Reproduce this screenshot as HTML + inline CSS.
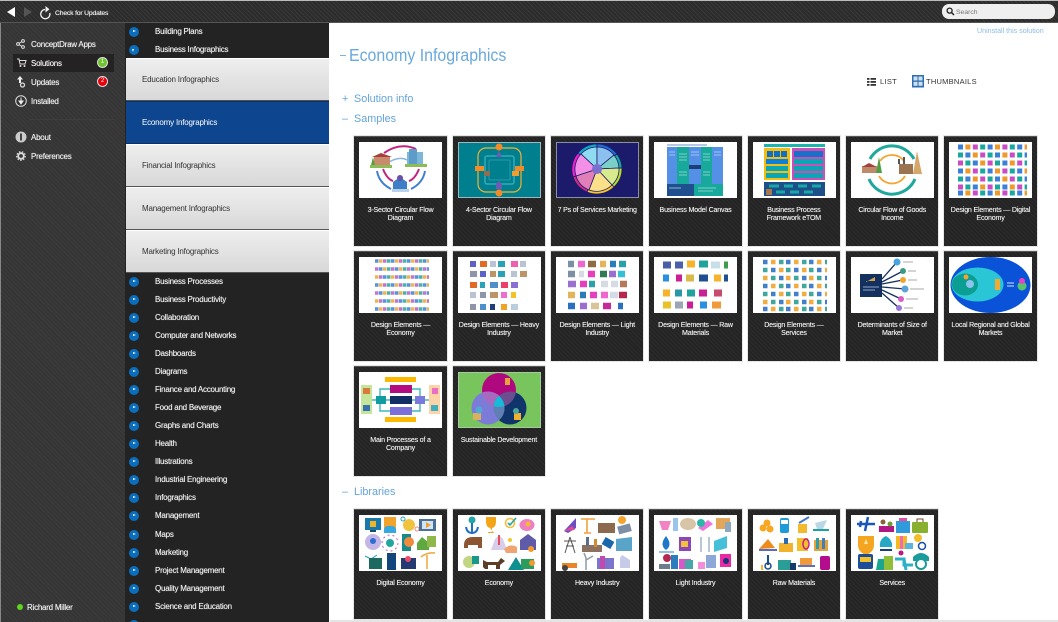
<!DOCTYPE html>
<html><head><meta charset="utf-8"><title>Economy Infographics</title>
<style>
*{box-sizing:border-box}
html,body{margin:0;padding:0;background:#fff}
body{width:1058px;height:622px;overflow:hidden;position:relative}
#w{position:absolute;left:0;top:0;width:1058px;height:622px;overflow:hidden;background:#fff;font-family:"Liberation Sans",sans-serif;filter:blur(.35px)}
.a{position:absolute}
#top{left:0;top:0;width:1058px;height:23px;border-top:1px solid #bbb;border-bottom:1px solid #555;background-color:#2c2c2c;background-image:repeating-linear-gradient(45deg,rgba(255,255,255,.06) 0 1px,transparent 1px 3px)}
#left{left:0;top:23px;width:125px;height:599px;background-color:#353535;background-image:repeating-linear-gradient(45deg,rgba(255,255,255,.03) 0 1px,transparent 1px 3px);border-left:1px solid #888}
#mid{left:125px;top:23px;width:204px;height:599px;background:#232323}
.t{position:absolute;margin-top:1px;white-space:nowrap;font-size:8px;letter-spacing:-.24px;line-height:10px;color:#f2f2f2;text-shadow:0 0 .6px rgba(255,255,255,.7)}
.m{left:155px}
.b{position:absolute;left:129px;width:10px;height:10px;border-radius:50%;background:#0a6ebd}
.b:after{content:"";position:absolute;left:4px;top:3.2px;border-left:3px solid #fff;border-top:1.8px solid transparent;border-bottom:1.8px solid transparent}
.b.d:after{left:3.2px;top:4px;border-top:3px solid #fff;border-left:1.8px solid transparent;border-right:1.8px solid transparent;border-bottom:0}
.p{position:absolute;left:126px;width:203px;height:43px;background:linear-gradient(#eee,#d8d8d8);border-bottom:1px solid #555;border-top:1px solid #fff;color:#333;font-size:8px;letter-spacing:-.2px;line-height:42px;padding-left:16px}
.p.s{background:#0d458f;color:#fff;border-top:1px solid #0a2f66;border-bottom:1px solid #0a2f66}
.c{position:absolute;width:92.4px;height:110px;background-color:#242424;background-image:repeating-linear-gradient(45deg,rgba(255,255,255,.035) 0 1px,transparent 1px 3px);border-top:1px solid #555;box-shadow:0 0 0 1px #e6e6e6}
.c svg{position:absolute;left:5px;top:5px;width:83px;height:56px;background:#fff;display:block}
.c div{position:absolute;left:1px;right:1px;top:69px;text-align:center;color:#f0f0f0;font-size:7.100px;letter-spacing:-.2px;line-height:8px;text-shadow:0 0 .5px rgba(255,255,255,.7)}
.h{position:absolute;color:#63a4da;font-size:10.800px;line-height:14px;white-space:nowrap}
</style></head><body><div id="w">

<div id="top" class="a"></div>
<svg class="a" style="left:6px;top:6px" width="100" height="14" viewBox="0 0 100 14">
<path d="M1 6 9 1V11Z" fill="#fff"/><path d="M18 1 26 6 18 11Z" fill="#555"/>
<path d="M39 3.500A4.600 4.600 0 1 0 43.800 7" fill="none" stroke="#eee" stroke-width="1.300"/><path d="M39.500 0V6.500L43.500 3.200Z" fill="#eee"/>
</svg>
<div class="t" style="left:55px;top:8px;font-size:6.800px;letter-spacing:-.18px">Check for Updates</div>
<div class="a" style="left:942px;top:4px;width:113px;height:15px;border-radius:7px;background:#efefef"></div>
<svg class="a" style="left:946px;top:7px" width="9" height="9" viewBox="0 0 9 9"><circle cx="3.600" cy="3.600" r="2.500" fill="none" stroke="#222" stroke-width="1.300"/><path d="M5.500 5.500 8 8" stroke="#222" stroke-width="1.500"/></svg>
<div class="t" style="left:956px;top:7px;color:#777;font-size:6.800px;letter-spacing:0;text-shadow:none">Search</div>

<div id="left" class="a"></div>
<div id="mid" class="a"></div>

<div class="a" style="left:13px;top:54px;width:101px;height:18px;background:#252223"></div>
<svg class="a" style="left:14px;top:36px" width="14" height="130" viewBox="0 0 14 130">
<g fill="none" stroke="#ddd" stroke-width="1"><circle cx="4" cy="8" r="1.400"/><circle cx="9" cy="5" r="1.400"/><circle cx="9" cy="11" r="1.400"/><path d="M5 7.500 8 5.500M5 8.500 8 10.500"/></g>
<path d="M3 23H5L6 28H11L12 24.500H5.500" fill="none" stroke="#ddd"/><circle cx="6.500" cy="30" r="1" fill="#ddd"/><circle cx="10.500" cy="30" r="1" fill="#ddd"/>
<path d="M6 40 9 43.500H7V47H5V43.500H3Z" fill="#eee"/><circle cx="8.500" cy="49" r="2" fill="none" stroke="#ddd" stroke-width="1.300"/>
<circle cx="7" cy="65" r="5.300" fill="#333" stroke="#ddd" stroke-width="1"/><path d="M7 61.500V66M5 65 7 68 9 65Z" stroke="#eee" fill="#eee"/>
<circle cx="7" cy="101" r="5.500" fill="#ccc"/><rect x="6" y="97.500" width="2" height="7" fill="#444"/>
<circle cx="7" cy="120" r="2.800" fill="none" stroke="#ddd" stroke-width="1.800"/><circle cx="7" cy="120" r="4.300" fill="none" stroke="#ddd" stroke-width="1.200" stroke-dasharray="1.500 1.500"/>
</svg>
<div class="t" style="left:31px;top:39px">ConceptDraw Apps</div>
<div class="t" style="left:31px;top:58px">Solutions</div>
<div class="t" style="left:31px;top:77px">Updates</div>
<div class="t" style="left:31px;top:96px">Installed</div>
<div class="t" style="left:31px;top:132px">About</div>
<div class="t" style="left:31px;top:151px">Preferences</div>
<div class="a" style="left:30px;top:119px;width:84px;height:1px;background:#3e3e3e"></div>
<div class="a" style="left:97px;top:57px;width:11px;height:11px;border-radius:50%;background:#6fc52c;border:1px solid #ddd;color:#fff;font-size:6px;line-height:9px;text-align:center">1</div>
<div class="a" style="left:97px;top:76px;width:11px;height:11px;border-radius:50%;background:#e8000d;border:1px solid #ddd;color:#fff;font-size:6px;line-height:9px;text-align:center">2</div>
<div class="a" style="left:17px;top:604px;width:6px;height:6px;border-radius:50%;background:#5fd31f"></div>
<div class="t" style="left:27px;top:602px">Richard Miller</div>

<div class="b" style="top:27px"></div><div class="t m" style="top:26px">Building Plans</div>
<div class="b d" style="top:45px"></div><div class="t m" style="top:44px">Business Infographics</div>
<div class="p" style="top:58px">Education Infographics</div>
<div class="p s" style="top:101px">Economy Infographics</div>
<div class="p" style="top:144px">Financial Infographics</div>
<div class="p" style="top:187px">Management Infographics</div>
<div class="p" style="top:230px">Marketing Infographics</div>

<div class="b" style="top:277px"></div><div class="t m" style="top:276px">Business Processes</div>
<div class="b" style="top:295px"></div><div class="t m" style="top:294px">Business Productivity</div>
<div class="b" style="top:313px"></div><div class="t m" style="top:312px">Collaboration</div>
<div class="b" style="top:331px"></div><div class="t m" style="top:330px">Computer and Networks</div>
<div class="b" style="top:349px"></div><div class="t m" style="top:348px">Dashboards</div>
<div class="b" style="top:367px"></div><div class="t m" style="top:366px">Diagrams</div>
<div class="b" style="top:385px"></div><div class="t m" style="top:384px">Finance and Accounting</div>
<div class="b" style="top:403px"></div><div class="t m" style="top:402px">Food and Beverage</div>
<div class="b" style="top:421px"></div><div class="t m" style="top:420px">Graphs and Charts</div>
<div class="b" style="top:439px"></div><div class="t m" style="top:438px">Health</div>
<div class="b" style="top:457px"></div><div class="t m" style="top:456px">Illustrations</div>
<div class="b" style="top:475px"></div><div class="t m" style="top:474px">Industrial Engineering</div>
<div class="b" style="top:493px"></div><div class="t m" style="top:492px">Infographics</div>
<div class="b" style="top:511px"></div><div class="t m" style="top:510px">Management</div>
<div class="b" style="top:530px"></div><div class="t m" style="top:529px">Maps</div>
<div class="b" style="top:548px"></div><div class="t m" style="top:547px">Marketing</div>
<div class="b" style="top:566px"></div><div class="t m" style="top:565px">Project Management</div>
<div class="b" style="top:584px"></div><div class="t m" style="top:583px">Quality Management</div>
<div class="b" style="top:602px"></div><div class="t m" style="top:601px">Science and Education</div>
<div class="b" style="top:620px"></div>

<div class="t" style="left:977px;top:25px;color:#8dbbe3;font-size:7.100px;letter-spacing:0;text-shadow:none">Uninstall this solution</div>
<div class="a" style="left:340px;top:55px;width:6px;height:1px;background:#7fb3de"></div>
<div class="t" style="left:349px;top:43px;font-size:17.300px;letter-spacing:0;line-height:22px;color:#6aa9dc;text-shadow:none;transform:scaleX(.92);transform-origin:0 0">Economy Infographics</div>

<svg class="a" style="left:866px;top:75px" width="60" height="14" viewBox="0 0 60 14"><g fill="#333"><rect x="1" y="3" width="2.500" height="1.800"/><rect x="4.500" y="3" width="5.500" height="1.800"/><rect x="1" y="6" width="2.500" height="1.800"/><rect x="4.500" y="6" width="5.500" height="1.800"/><rect x="1" y="9" width="2.500" height="1.800"/><rect x="4.500" y="9" width="5.500" height="1.800"/></g>
<rect x="46" y="0" width="12" height="12.500" fill="#2e6fb0"/><g fill="#cfe0f0"><rect x="47.500" y="1.500" width="4" height="4"/><rect x="52.500" y="1.500" width="4" height="4"/><rect x="47.500" y="6.800" width="4" height="4"/><rect x="52.500" y="6.800" width="4" height="4"/></g></svg>
<div class="t" style="left:880px;top:76px;color:#333;font-size:7.500px;letter-spacing:.3px;text-shadow:none">LIST</div>
<div class="t" style="left:926px;top:76px;color:#333;font-size:7.500px;letter-spacing:.25px;text-shadow:none">THUMBNAILS</div>

<div class="h" style="left:342px;top:91.500px">+</div><div class="h" style="left:354px;top:91.500px">Solution info</div>
<div class="h" style="left:342px;top:111.500px">&#8211;</div><div class="h" style="left:354px;top:111.500px">Samples</div>
<div class="h" style="left:342px;top:484.500px">&#8211;</div><div class="h" style="left:354px;top:484.500px">Libraries</div>

<!-- Row 1 -->
<div class="c" style="left:354.300px;top:135.500px"><svg viewBox="0 0 83 56"><path d="M25 11Q41 0 57 7" fill="none" stroke="#c0267f" stroke-width="2"/><path d="M30 20Q41 14 48 18" fill="none" stroke="#8ab4e0" stroke-width="1.500"/><path d="M18 29Q20 41 32 47" fill="none" stroke="#3f7fd0" stroke-width="2"/><path d="M66 29Q64 41 52 47" fill="none" stroke="#3f7fd0" stroke-width="2"/><path d="M24 27Q28 37 34 39M60 27Q56 37 50 39" fill="none" stroke="#c0267f" stroke-width="2"/><path d="M11 23H33V26H11Z" fill="#8bbd55"/><rect x="15" y="14" width="16" height="9" fill="#c98a6e"/><path d="M13 15 22 11 33 15Z" fill="#a3413a"/><path d="M12 23 14 15 16 23Z" fill="#5a9e3c"/><rect x="48" y="10" width="16" height="13" fill="#7cb6d8"/><rect x="50" y="7" width="8" height="16" fill="#5d9cc8"/><rect x="46" y="22" width="22" height="3" fill="#8bbd55"/><path d="M34 48V40L41 35 48 40V48Z" fill="#3e7ec6"/><circle cx="41" cy="36" r="3" fill="#6b4fa5"/><rect x="33" y="47" width="17" height="3" fill="#b7d1e8"/></svg><div>3-Sector Circular Flow<br>Diagram</div></div>
<div class="c" style="left:452.700px;top:135.500px"><svg viewBox="0 0 83 56" style="background:#00808f"><rect x=".5" y=".5" width="82" height="55" fill="none" stroke="#9fb8bd"/><rect x="20" y="6" width="43" height="44" rx="8" fill="none" stroke="#f2b233" stroke-width="1.200"/><rect x="27" y="14" width="29" height="28" rx="2" fill="none" stroke="#35a9b8" stroke-width="1.500"/><rect x="31" y="18" width="21" height="20" rx="1" fill="none" stroke="#2a98a8"/><circle cx="41" cy="5" r="3.500" fill="#f28c28"/><circle cx="41" cy="51" r="3.500" fill="#f28c28"/><rect x="17" y="24" width="9" height="5" fill="#f28c28"/><rect x="57" y="24" width="9" height="5" fill="#f28c28"/><path d="M38 15 41 9 44 15Z" fill="#6d5bb5"/><path d="M38 47V42L41 39 44 42V47Z" fill="#6d5bb5"/><rect x="26" y="29" width="6" height="5" fill="#8d6e52"/><rect x="54" y="29" width="7" height="5" fill="#ec9f2e"/></svg><div>4-Sector Circular Flow<br>Diagram</div></div>
<div class="c" style="left:551px;top:135.500px"><svg viewBox="0 0 83 56" style="background:#1c1b6b"><rect x=".5" y=".5" width="82" height="55" fill="none" stroke="#8a8fa8"/><g stroke="#1c1b6b" stroke-width=".8"><path d="M41 27V2A25 25 0 0 0 22 11Z" fill="#12a8c8"/><path d="M41 27V2A25 25 0 0 1 61 12Z" fill="#1d6fd0"/><path d="M41 27 61 12A25 25 0 0 1 66 26Z" fill="#18a8a0"/><path d="M41 27 66 26A25 25 0 0 1 58 45Z" fill="#b8dc2a"/><path d="M41 27 58 45A25 25 0 0 1 31 50Z" fill="#f6c62a"/><path d="M41 27 31 50A25 25 0 0 1 17 35Z" fill="#cb2a88"/><path d="M41 27 17 35A25 25 0 0 1 22 11Z" fill="#ec1fd0"/><path d="M41 27V5A22 22 0 0 0 25 12Z" fill="#8fdcf0"/><path d="M41 27V5A22 22 0 0 1 58 13Z" fill="#8cc0ee"/><path d="M41 27 58 13A22 22 0 0 1 63 26Z" fill="#7ad0c8"/><path d="M41 27 63 26A22 22 0 0 1 56 43Z" fill="#d8ea8e"/><path d="M41 27 56 43A22 22 0 0 1 33 48Z" fill="#fbe08a"/><path d="M41 27 33 48A22 22 0 0 1 20 34Z" fill="#e07fb8"/><path d="M41 27 20 34A22 22 0 0 1 25 12Z" fill="#f48fe8"/></g><circle cx="41" cy="27" r="5" fill="#7b6fd0"/></svg><div>7 Ps of Services Marketing</div></div>
<div class="c" style="left:649.300px;top:135.500px"><svg viewBox="0 0 83 56"><rect x="13" y="5" width="56" height="37" fill="#5390e6"/><rect x="23" y="5" width="12" height="37" fill="#16a99c"/><rect x="47" y="5" width="11" height="37" fill="#16a99c"/><rect x="35" y="23" width="12" height="4" fill="#1d3f79"/><rect x="13" y="42" width="27" height="12" fill="#1f4f8f"/><rect x="40" y="42" width="29" height="12" fill="#16a99c"/><rect x="13" y="2" width="40" height="2" fill="#b7c9e2"/><path d="M25 12h8M25 15h8M25 18h8M49 12h7M49 15h7M49 18h7M25 30h8M25 33h8M49 30h7M49 33h7M15 46h12M44 46h18M44 49h15" stroke="#a8dcd8" stroke-width=".7"/><path d="M15 10h6M15 13h6M37 10h8M37 13h8M60 10h7M60 13h7" stroke="#bcd4f4" stroke-width=".7"/></svg><div>Business Model Canvas</div></div>
<div class="c" style="left:747.700px;top:135.500px"><svg viewBox="0 0 83 56"><rect x="11" y="2" width="61" height="3" fill="#1cb5ae"/><rect x="11" y="6" width="26" height="32" fill="#f4bd12"/><rect x="14" y="9" width="6" height="6" fill="#0d6fc6"/><rect x="21" y="9" width="6" height="6" fill="#0d6fc6"/><rect x="28" y="9" width="6" height="6" fill="#0d6fc6"/><rect x="13" y="17" width="22" height="5" fill="#0d7fd6"/><rect x="13" y="24" width="22" height="5" fill="#0aa6b5"/><rect x="13" y="31" width="22" height="5" fill="#0aa6b5"/><rect x="39" y="6" width="33" height="32" fill="#cb4fb5"/><rect x="41" y="9" width="29" height="6" fill="#1a6fc8"/><rect x="41" y="17" width="29" height="5" fill="#0aa6b5"/><rect x="41" y="24" width="29" height="5" fill="#0aa6b5"/><rect x="41" y="31" width="29" height="5" fill="#0aa6b5"/><rect x="11" y="40" width="61" height="14" fill="#1d4f88"/><path d="M16 44h10M31 44h9M45 44h9M59 44h9M23 50h9M37 50h9M51 50h9" stroke="#17a8a8" stroke-width="3"/><rect x="13" y="47" width="6" height="6" fill="#a9774a"/></svg><div>Business Process<br>Framework eTOM</div></div>
<div class="c" style="left:846px;top:135.500px"><svg viewBox="0 0 83 56"><path d="M19 17A25 25 0 0 1 63 17" fill="none" stroke="#1fa89c" stroke-width="3"/><path d="M64 37A25 25 0 0 1 18 37" fill="none" stroke="#1fa89c" stroke-width="3"/><path d="M29 19A15 15 0 0 1 53 19M54 34A15 15 0 0 1 28 34" fill="none" stroke="#f5a531" stroke-width="1.800"/><rect x="11" y="24" width="15" height="7" fill="#bf8a6a"/><path d="M11 25 18 21 26 25Z" fill="#a3413a"/><path d="M25 31 28 15 31 31Z" fill="#4f9e45"/><rect x="48" y="22" width="14" height="10" fill="#9b7350"/><path d="M62 32 66 9 71 32Z" fill="#d5a76a"/><path d="M48 22V17M53 22V15" stroke="#555" stroke-width="2"/></svg><div>Circular Flow of Goods<br>Income</div></div>
<div class="c" style="left:944.300px;top:135.500px"><svg viewBox="0 0 83 56"><g fill="none" stroke-width="5" stroke-dasharray="5 24.600"><path stroke="#3a7fd8" d="M9 5H78M16.400 13H78M23.800 21H78M9 29H78M16.400 37H78M23.800 45H78M9 51H78"/><path stroke="#ee9a2a" d="M16.400 5H78M23.800 13H78M31.200 21H78M16.400 29H78M23.800 37H78M31.200 45H78M16.400 51H78"/><path stroke="#c94cc4" d="M23.800 5H78M31.200 13H78M9 21H78M23.800 29H78M31.200 37H78M9 45H78M23.800 51H78"/><path stroke="#17a8a0" d="M31.200 5H78M9 13H78M16.400 21H78M31.200 29H78M9 37H78M16.400 45H78M31.200 51H78"/></g></svg><div>Design Elements &#8212; Digital<br>Economy</div></div>

<!-- Row 2 -->
<div class="c" style="left:354.300px;top:250.500px"><svg viewBox="0 0 83 56"><g fill="none" stroke-width="3.500" stroke-dasharray="3.500 12.500" opacity=".85"><path stroke="#3a7fd8" d="M16 4H70M20 12H70M24 20H70M16 28H70M20 36H70M24 44H70M16 52H70"/><path stroke="#f0a52e" d="M20 4H70M24 12H70M16 20H70M20 28H70M24 36H70M16 44H70M20 52H70"/><path stroke="#b25ec9" d="M24 4H70M16 12H70M20 20H70M24 28H70M16 36H70M20 44H70M24 52H70"/><path stroke="#29a69b" d="M28 4H70M28 12H70M28 20H70M28 28H70M28 36H70M28 44H70M28 52H70"/></g></svg><div>Design Elements &#8212;<br>Economy</div></div>
<div class="c" style="left:452.700px;top:250.500px"><svg viewBox="0 0 83 56"><g fill="none" stroke-width="6"><path stroke="#5d62c9" d="M12 7h6M22 17h6"/><path stroke="#e26a25" d="M22 7h7M12 28h7"/><path stroke="#b9c3d4" d="M32 7h6M12 38h6M62 7h6M53 17h6"/><path stroke="#28a3b6" d="M40 7h7M40 17h7M22 28h5"/><path stroke="#ef5fb0" d="M53 7h7"/><path stroke="#8f95a8" d="M12 17h7M22 38h6M12 50h6"/><path stroke="#bd9468" d="M32 17h6M62 17h7M32 38h8"/><path stroke="#4f8fc9" d="M32 28h8M22 50h6"/><path stroke="#ee3f6a" d="M43 28h7"/><path stroke="#8a6fd0" d="M53 28h7"/><path stroke="#ef6cd0" d="M43 38h6"/><path stroke="#f1c325" d="M53 38h5"/><path stroke="#1e3f7a" d="M32 50h5"/><path stroke="#f1a325" d="M43 50h6"/><path stroke="#b8cddd" d="M53 50h7"/></g></svg><div>Design Elements &#8212; Heavy<br>Industry</div></div>
<div class="c" style="left:551px;top:250.500px"><svg viewBox="0 0 83 56"><g fill="none" stroke-width="6.500"><path stroke="#7b8fa5" d="M12 7h6M12 17h7"/><path stroke="#ef66cf" d="M22 7h7M45 38h7"/><path stroke="#8e6b42" d="M32 7h8"/><path stroke="#e4b45a" d="M44 7h6M12 38h7"/><path stroke="#2a7db8" d="M54 7h6M24 38h6"/><path stroke="#2aa0a8" d="M63 7h7M33 27h6"/><path stroke="#d5dae5" d="M23 17h5M45 27h7M55 27h7M54 38h8"/><path stroke="#e63fbc" d="M32 17h7M24 27h7M34 38h7"/><path stroke="#2f7a55" d="M44 17h7"/><path stroke="#9a6fd0" d="M53 17h7M12 27h8M24 49h7"/><path stroke="#35c0d8" d="M62 17h7"/><path stroke="#b5785a" d="M64 27h7"/><path stroke="#b5274d" d="M63 38h8"/><path stroke="#2a6fc0" d="M12 49h7M62 49h5"/><path stroke="#d9c49a" d="M35 49h8"/><path stroke="#c42a9a" d="M47 49h8"/></g></svg><div>Design Elements &#8212; Light<br>Industry</div></div>
<div class="c" style="left:649.300px;top:250.500px"><svg viewBox="0 0 83 56"><g fill="none" stroke-width="7"><path stroke="#4b5fa8" d="M9 8h8M21 8h8"/><path stroke="#f7b32a" d="M33 7h8M9 36h7M60 21h7"/><path stroke="#20a39c" d="M45 7h9M33 36h8"/><path stroke="#c8dfe8" d="M57 8h9"/><path stroke="#3c9e4a" d="M70 8h4"/><path stroke="#2a8fe0" d="M9 21h6M46 48h7"/><path stroke="#cb1f95" d="M22 21h6M45 36h8M33 48h6"/><path stroke="#d9b94a" d="M32 21h8"/><path stroke="#1f4f8f" d="M45 21h9M70 21h4"/><path stroke="#2a97a8" d="M21 36h7"/><path stroke="#c94a70" d="M60 36h8"/><path stroke="#e9c22a" d="M9 48h8"/><path stroke="#9aa5b5" d="M21 48h8"/><path stroke="#f09a3a" d="M58 48h9"/></g></svg><div>Design Elements &#8212; Raw<br>Materials</div></div>
<div class="c" style="left:747.700px;top:250.500px"><svg viewBox="0 0 83 56"><g fill="none" stroke-width="4.500" stroke-dasharray="4.500 18.500" opacity=".9"><path stroke="#2f73c7" d="M10 5H74M18 13H74M26 21H74M10 29H74M18 37H74M26 45H74M10 52H74"/><path stroke="#f2a42b" d="M18 5H74M26 13H74M10 21H74M18 29H74M26 37H74M10 45H74M18 52H74"/><path stroke="#2a9f94" d="M26 5H74M10 13H74M18 21H74M26 29H74M10 37H74M18 45H74M26 52H74"/></g></svg><div>Design Elements &#8212;<br>Services</div></div>
<div class="c" style="left:846px;top:250.500px"><svg viewBox="0 0 83 56"><rect x="9" y="17" width="22" height="23" fill="#14305f"/><path d="M31 22 46 5M31 25 52 14M31 27 52 23M31 30 54 32M31 33 50 42M31 36 48 51" stroke="#14305f" stroke-width="1.300" fill="none"/><circle cx="46" cy="5" r="3.500" fill="#4aa5de"/><circle cx="52" cy="14" r="3" fill="#3c9b80"/><circle cx="52" cy="23" r="3" fill="#f2a52e"/><circle cx="54" cy="32" r="3.500" fill="#5ba3d6"/><circle cx="50" cy="42" r="3" fill="#d85ec4"/><circle cx="48" cy="51" r="3" fill="#9a7ad8"/><path d="M52 5H62M57 14H65M57 23H66M59 32H73M55 42H67M53 51H62" stroke="#aaa"/><path d="M15 25 24 20V24H15Z" fill="#d4a54a"/><path d="M12 30h16M12 33h12" stroke="#8fa6c8"/></svg><div>Determinants of Size of<br>Market</div></div>
<div class="c" style="left:944.300px;top:250.500px"><svg viewBox="0 0 83 56"><ellipse cx="41.500" cy="28" rx="40" ry="28" fill="#0a53d8"/><ellipse cx="28.500" cy="27.500" rx="26" ry="17" fill="#2bc6d6"/><ellipse cx="16" cy="27.500" rx="13" ry="11" fill="#0b9e93"/><circle cx="21" cy="27" r="4" fill="#8cc4ee"/><circle cx="17" cy="20" r="2.500" fill="#f2a52e"/><rect x="46" y="22" width="5" height="11" fill="#f0aa35"/><circle cx="73" cy="29" r="4.500" fill="#58c26f"/><circle cx="73" cy="24" r="3" fill="#e643c4"/><path d="M58 26h7M58 29h7" stroke="#cfe3ff"/></svg><div>Local Regional and Global<br>Markets</div></div>

<!-- Row 3 -->
<div class="c" style="left:354.300px;top:365.500px"><svg viewBox="0 0 83 56"><rect x="26" y="5" width="31" height="5" fill="#ffb800"/><rect x="26" y="45" width="31" height="5" fill="#ffb800"/><rect x="2" y="13" width="11" height="29" fill="#c5e59a"/><rect x="70" y="13" width="11" height="29" fill="#fdd4a8"/><rect x="17" y="24" width="10" height="8" fill="#109ca0"/><rect x="56" y="24" width="10" height="8" fill="#7b79db"/><rect x="31" y="13" width="22" height="8" fill="#b40c7e"/><rect x="31" y="24" width="22" height="8" fill="#132e63"/><rect x="31" y="35" width="22" height="8" fill="#7c6fd8"/><path d="M13 28H17M27 28H31M53 28H56M66 28H70M21 24V17H31M21 32V39H31M61 24V17H53M61 32V39H53" stroke="#3cb8bc" stroke-width="1.400" fill="none"/><rect x="4" y="16" width="7" height="6" fill="#d87a3a"/><rect x="4" y="33" width="7" height="6" fill="#3a6fb0"/><rect x="73" y="16" width="6" height="6" fill="#e86fc4"/><rect x="72" y="33" width="7" height="6" fill="#40b0c0"/></svg><div>Main Processes of a<br>Company</div></div>
<div class="c" style="left:452.700px;top:365.500px"><svg viewBox="0 0 83 56" style="background:#79c55d"><defs><clipPath id="ct"><circle cx="41" cy="18" r="17"/></clipPath><clipPath id="cl"><circle cx="30" cy="36" r="16.500"/></clipPath></defs><rect x=".5" y=".5" width="82" height="55" fill="none" stroke="#a8c8a0"/><circle cx="41" cy="18" r="17" fill="#b0087f"/><circle cx="52" cy="36" r="16.500" fill="#10356b"/><circle cx="30" cy="36" r="16.500" fill="#7c7cd8"/><g clip-path="url(#ct)"><circle cx="30" cy="36" r="16.500" fill="#a76ac0"/><circle cx="52" cy="36" r="16.500" fill="#6c4d8f"/></g><g clip-path="url(#cl)"><circle cx="52" cy="36" r="16.500" fill="#5f7fb5"/></g><g clip-path="url(#ct)"><g clip-path="url(#cl)"><circle cx="52" cy="36" r="16.500" fill="#14bcd8"/></g></g><rect x="47" y="6" width="5" height="7" fill="#e8a040"/><rect x="15" y="41" width="8" height="7" fill="#d8b060"/><circle cx="21" cy="38" r="3.500" fill="#4fa8d8"/><rect x="56" y="41" width="7" height="7" fill="#f2b030"/><circle cx="58" cy="39" r="3" fill="#48a8a0"/></svg><div>Sustainable Development</div></div>

<!-- Libraries -->
<div class="c" style="left:354.300px;top:508.500px"><svg viewBox="0 0 83 56"><rect x="6" y="3" width="16" height="12" fill="#1979a8"/><rect x="11" y="15" width="6" height="2" fill="#14506e"/><rect x="11" y="6" width="6" height="6" fill="#f2b32a"/><rect x="25" y="2" width="12" height="12" fill="#f3a42c"/><path d="M25 18Q24 10 31 11 38 10 37 18Z" fill="#33a9e0"/><circle cx="50" cy="10" r="6" fill="#f0c33c"/><circle cx="44" cy="4" r="2" fill="none" stroke="#29a6c8"/><circle cx="58" cy="14" r="2" fill="none" stroke="#e88"/><rect x="60" y="4" width="17" height="12" fill="#4c6f96"/><rect x="63" y="6" width="11" height="8" fill="#cfe4f4"/><path d="M67 7V13L72 10Z" fill="#f0a030"/><circle cx="14" cy="27" r="8" fill="#c4b7e6"/><circle cx="14" cy="26" r="3" fill="#2c6ed2"/><circle cx="31" cy="28" r="4" fill="#23a5a0"/><circle cx="31" cy="28" r="8" fill="none" stroke="#c05ed0" stroke-dasharray="2 3"/><rect x="43" y="19" width="9" height="17" fill="#168b8b"/><circle cx="50" cy="27" r="5" fill="#f28a3c"/><path d="M63 22 70 28V35H58V28Z" fill="#5fa73f"/><rect x="68" y="21" width="9" height="11" fill="#8fb84a"/><path d="M6 41 12 44 18 40" stroke="#1f9ec4" fill="none"/><rect x="10" y="43" width="13" height="11" fill="#1c6a5f"/><rect x="28" y="38" width="9" height="17" fill="#13467a"/><rect x="42" y="43" width="15" height="11" fill="#233b72"/><circle cx="49" cy="44" r="3" fill="#ee4a6a"/><path d="M68 54V40M62 42Q68 37 76 38" stroke="#f0a536" stroke-width="1.500" fill="none"/></svg><div>Digital Economy</div></div>
<div class="c" style="left:452.700px;top:508.500px"><svg viewBox="0 0 83 56"><circle cx="14" cy="5" r="3.500" fill="#27a6a6"/><path d="M14 8V17M8 12Q9 18 14 18 19 18 20 12" stroke="#1f6fc9" stroke-width="2" fill="none"/><path d="M28 2H38V6Q38 13 33 13 28 13 28 6ZM32 13H34V17H30V18H36" fill="#f4a418"/><circle cx="52" cy="8" r="4.500" fill="none" stroke="#f2be3c" stroke-width="1.600"/><path d="M50 8 52 10 58 3" stroke="#22a8a0" stroke-width="1.600" fill="none"/><ellipse cx="69" cy="10" rx="7.500" ry="6" fill="#ef80c0"/><circle cx="70" cy="9" r="2.500" fill="#f3ba3a"/><path d="M6 30Q6 22 15 22H24V33H20V30H10V33H6Z" fill="#8d5632"/><path d="M33 35 37 24 41 20 45 24 49 35Z" fill="#d8cdea"/><path d="M41 20V30" stroke="#e84b5c" stroke-width="2"/><path d="M46 34Q52 28 59 32V38H48Z" fill="#f0a472"/><circle cx="52" cy="25" r="2" fill="#f4c634"/><path d="M62 25 70 19 78 25V35H62Z" fill="#5f5ba8"/><circle cx="73" cy="34" r="3" fill="#f29a2e"/><circle cx="11" cy="47" r="6" fill="#c0d684"/><rect x="14" y="41" width="7" height="8" fill="#17988b"/><path d="M25 52V45L29 47H40L43 43 47 46 42 50V54H38V50H30V54H27Z" fill="#5c3d28"/><path d="M50 55 58 42 66 55Z" fill="#0e8f90"/><rect x="63" y="44" width="13" height="10" fill="#2a9d5c"/><circle cx="74" cy="48" r="3" fill="#f09a30"/></svg><div>Economy</div></div>
<div class="c" style="left:551px;top:508.500px"><svg viewBox="0 0 83 56"><path d="M8 16 20 3V13L12 18Z" fill="#6d4dc4"/><path d="M8 16 16 11 19 15Z" fill="#e14a92"/><path d="M25 4H39M31 4V18M28 18H35" stroke="#f0a23a" stroke-width="1.600" fill="none"/><rect x="42" y="8" width="17" height="10" fill="#8d6a4e"/><circle cx="66" cy="5" r="4" fill="#f2a62f"/><rect x="62" y="10" width="13" height="8" fill="#7d8fa5" transform="rotate(-15 68 14)"/><path d="M14 22 9 38M14 22 19 38M8 26H20M10 31H18" stroke="#555" fill="none"/><rect x="26" y="30" width="20" height="7" fill="#8d7160"/><rect x="30" y="22" width="3" height="9" fill="#5e6f8a"/><rect x="38" y="24" width="3" height="8" fill="#d18c33"/><rect x="47" y="24" width="10" height="8" fill="#1a68aa" transform="rotate(30 52 28)"/><path d="M60 36V24L76 22V36Z" fill="#58a5c9"/><path d="M6 48H21V53H6Z" fill="#e9862a"/><circle cx="9" cy="53" r="3" fill="#444"/><path d="M30 55V43L28 38M30 45 37 41" stroke="#8d9aa9" stroke-width="1.500" fill="none"/><rect x="41" y="43" width="17" height="11" fill="#7a76cd"/><rect x="44" y="41" width="5" height="13" fill="#c04ab0"/><path d="M66 40 74 45V53H64V43Z" fill="#c6cbe9"/></svg><div>Heavy Industry</div></div>
<div class="c" style="left:649.300px;top:508.500px"><svg viewBox="0 0 83 56"><path d="M5 6H17L14 15H8Z" fill="#f183c4"/><rect x="19" y="3" width="5" height="13" fill="#9ac5ea"/><ellipse cx="34" cy="9" rx="8" ry="6" fill="#d8c5a7"/><path d="M44 13 54 5 59 9 49 16Z" fill="#f073d9"/><circle cx="47" cy="8" r="4" fill="#2bb7a8"/><rect x="62" y="3" width="14" height="11" fill="#e4a75a"/><rect x="71" y="7" width="6" height="10" fill="#8ea8bf"/><path d="M12 21Q5 30 12 35 19 30 12 21Z" fill="#1f77c9"/><path d="M5 37H20" stroke="#8dc1e9" stroke-width="2"/><rect x="25" y="22" width="12" height="14" fill="#8c46b5"/><rect x="27" y="26" width="7" height="6" fill="#f4c23c"/><path d="M47 22V37M55 22V37" stroke="#b9c7d4" stroke-width="2"/><path d="M60 26 73 21V33L60 37Z" fill="#46c0d8"/><circle cx="13" cy="43" r="4" fill="#b22a52"/><path d="M5 49H16V54H5Z" fill="#6d7d8d"/><rect x="17" y="40" width="7" height="14" fill="#2a7dbd"/><rect x="25" y="44" width="12" height="10" fill="#d758c8"/><rect x="31" y="45" width="8" height="9" fill="#45a7a8"/><rect x="44" y="47" width="7" height="7" fill="#f58cd9"/><rect x="52" y="40" width="10" height="13" fill="#8da7d9"/><rect x="66" y="39" width="11" height="13" fill="#e92aa3"/><circle cx="72" cy="46" r="3" fill="#19337b"/></svg><div>Light Industry</div></div>
<div class="c" style="left:747.700px;top:508.500px"><svg viewBox="0 0 83 56"><circle cx="14" cy="8" r="3.500" fill="#f7a722"/><circle cx="10" cy="13" r="3.500" fill="#f7a722"/><circle cx="17" cy="14" r="3.500" fill="#f7a722"/><rect x="27" y="3" width="9" height="15" rx="2" fill="#1f9cd8"/><rect x="28" y="5" width="7" height="4" fill="#fff"/><rect x="45" y="9" width="9" height="9" fill="#f2ba2c"/><path d="M46 8 56 2" stroke="#4279c6" stroke-width="2"/><path d="M62 8 74 5 70 14H64Z" fill="#b9d8e6"/><path d="M60 15H76" stroke="#1ba1a1" stroke-width="2"/><path d="M6 34 15 24 22 33Z" fill="#ee8b1a"/><path d="M6 35H24" stroke="#5a6dbd" stroke-width="2"/><rect x="26" y="28" width="14" height="9" fill="#f2b22c"/><rect x="31" y="23" width="4" height="6" fill="#2b69b0"/><rect x="44" y="23" width="11" height="13" fill="#f2be2a"/><ellipse cx="53" cy="29" rx="3" ry="5" fill="none" stroke="#c71f84" stroke-width="1.500"/><rect x="61" y="25" width="14" height="11" fill="#e5a33d"/><rect x="63" y="23" width="3" height="11" fill="#2f9da9"/><rect x="69" y="23" width="3" height="11" fill="#3f7fbb"/><path d="M15 40V50" stroke="#174f8f" stroke-width="2"/><circle cx="15" cy="51" r="3" fill="none" stroke="#174f8f" stroke-width="1.500"/><path d="M9 50V55" stroke="#f4b82a" stroke-width="2"/><rect x="25" y="45" width="13" height="10" fill="#2a9d97"/><rect x="37" y="48" width="6" height="7" fill="#173a6b"/><rect x="47" y="43" width="12" height="8" fill="#f09a3a"/><path d="M45 51H62" stroke="#5b6fc4" stroke-width="2"/><rect x="67" y="41" width="10" height="14" rx="2" fill="#b30d8e"/></svg><div>Raw Materials</div></div>
<div class="c" style="left:846px;top:508.500px"><svg viewBox="0 0 83 56"><path d="M6 9H24M17 2 14 16M10 6 9 12" stroke="#1a56b8" stroke-width="2.500" fill="none"/><rect x="28" y="11" width="15" height="6" fill="#b21584"/><circle cx="32" cy="7" r="2.500" fill="#8a5f3c"/><circle cx="39" cy="9" r="2.500" fill="#6a9d2c"/><rect x="45" y="6" width="14" height="12" fill="#2f9bdb"/><rect x="48" y="3" width="8" height="3" fill="#e54fa3"/><rect x="61" y="7" width="16" height="11" rx="1" fill="#88b02e"/><path d="M66 7V4H72V7" stroke="#6f4a22" fill="none"/><path d="M7 21H23V30Q23 37 15 40 7 37 7 30Z" fill="#f4a622"/><path d="M15 24 17 29H13Z" fill="#ffe7a0"/><path d="M29 32Q28 24 35 21 42 25 41 32Z" fill="#27a9c6"/><rect x="29" y="34" width="12" height="2" fill="#163f7a"/><rect x="45" y="21" width="11" height="13" fill="#f4b91f"/><rect x="49" y="21" width="3" height="13" fill="#f06bb3"/><rect x="54" y="28" width="8" height="6" fill="#58b5e0"/><circle cx="67" cy="23" r="4" fill="#f4bd2a"/><circle cx="71" cy="31" r="3.500" fill="none" stroke="#174ea6" stroke-width="1.500"/><rect x="7" y="39" width="15" height="15" rx="2" fill="#1d4f99"/><rect x="9" y="42" width="11" height="5" fill="#f3c22f"/><path d="M25 55 27 44H36L39 55Z" fill="#1aa58f"/><rect x="33" y="41" width="9" height="14" fill="#92bf3a"/><path d="M44 44H53V50H62M53 44 55 55" stroke="#2fb0c9" stroke-width="3" fill="none"/><circle cx="50" cy="38" r="2.500" fill="#c31484"/><path d="M62 42Q70 34 78 42V46H73V44H67V46H62Z" fill="#1a9c9a"/><circle cx="70" cy="49" r="5" fill="none" stroke="#1a9c9a" stroke-width="2"/></svg><div>Services</div></div>

<div class="a" style="left:330px;top:619.500px;width:728px;height:2.500px;background:#e4e4e4"></div>
</div></body></html>
